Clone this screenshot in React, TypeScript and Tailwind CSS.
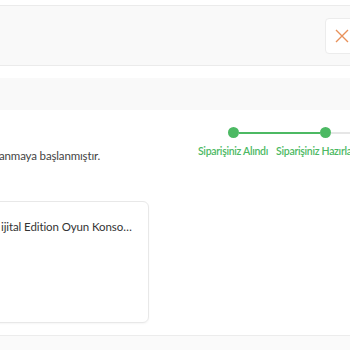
export default function App() {
  return (
    <div className="w-[350px] h-[350px] overflow-hidden bg-white font-['Lato','Noto_Sans',sans-serif] text-[#333]">
      <div className="h-[5px] bg-white" />
      <div className="h-[61px] bg-[#f9f9f9] border-y border-[#ebebeb] flex items-center justify-end">
        <button className="w-[34px] h-[36px] -mr-[9px] bg-white border border-[#ececec] rounded-[4px] flex items-center justify-center">
          <svg width="14" height="14" viewBox="0 0 14 14" fill="none" stroke="#e8915a" strokeWidth="1.4">
            <path d="M1 1 L13 13 M13 1 L1 13" />
          </svg>
        </button>
      </div>
      <div className="h-[12px]" />
      <div className="h-[32px] bg-[#f9f9f9]" />

      <div className="flex justify-between h-[90px] pt-[16px]">
        <p className="text-[11.5px] tracking-[-0.15px] text-[#444] pt-[21px] -ml-[1px] whitespace-nowrap">anmaya başlanmıştır.</p>
        <div className="flex -mr-[21px] pt-[1px]">
          <div className="w-[92px] flex flex-col items-center">
            <div className="flex items-center w-full h-[11px]">
              <div className="flex-1" />
              <div className="w-[11px] h-[11px] rounded-full bg-[#4cb963]" />
              <div className="flex-1 h-[2px] bg-[#4cb963]" />
            </div>
            <span className="mt-[6px] text-[10.5px] tracking-[-0.3px] font-semibold text-[#4cb963] whitespace-nowrap">Siparişiniz Alındı</span>
          </div>
          <div className="w-[92px] flex flex-col items-center">
            <div className="flex items-center w-full h-[11px]">
              <div className="flex-1 h-[2px] bg-[#4cb963]" />
              <div className="w-[11px] h-[11px] rounded-full bg-[#4cb963]" />
              <div className="flex-1 h-[2px] bg-[#e6e6e6]" />
            </div>
            <span className="mt-[6px] text-[10.5px] tracking-[-0.3px] font-semibold text-[#4cb963] whitespace-nowrap">Siparişiniz Hazırlanıyor</span>
          </div>
        </div>
      </div>

      <div className="h-[1px]" />
      <div className="w-[159px] h-[122px] -ml-[10px] border border-[#e8e8e8] rounded-[6px] shadow-[0_1px_2px_rgba(0,0,0,0.04)] pt-[16px] pl-[10px] pr-[14px]">
        <p className="text-[11.5px] tracking-[-0.1px] text-[#333] whitespace-nowrap overflow-hidden text-ellipsis">ijital Edition Oyun Konsolu PS5</p>
      </div>
      <div className="h-[12px]" />
      <div className="h-[20px] bg-[#fafafa] border-t border-[#ececec]" />
    </div>
  )
}
